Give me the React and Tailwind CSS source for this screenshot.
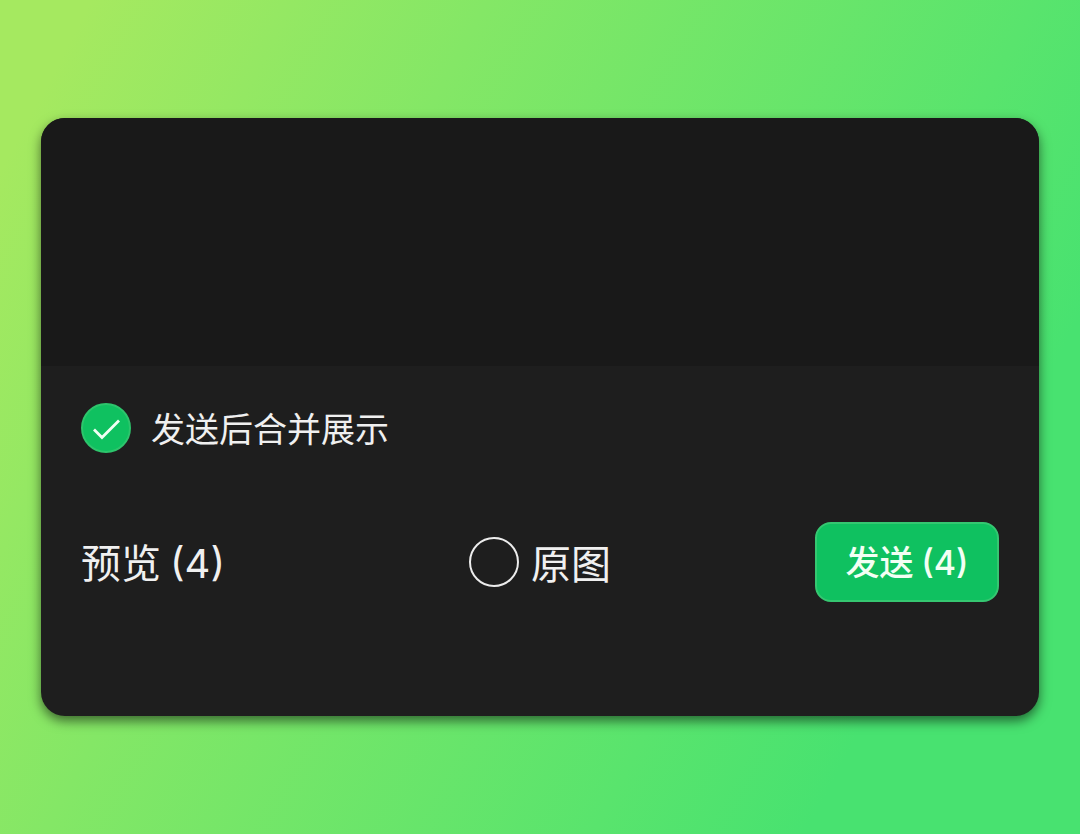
import { useState } from 'react';

function RoundCheck({ id, checked, onChange }) {
  return (
    <span className="grid shrink-0 place-items-center">
      <input
        id={id}
        type="checkbox"
        checked={checked}
        onChange={(e) => onChange(e.target.checked)}
        className="col-start-1 row-start-1 size-[50px] cursor-pointer appearance-none rounded-full border-2 border-[#ececec] checked:border-[#2dc56c] checked:bg-[#0fc160]"
      />
      {checked && (
        <svg
          viewBox="0 0 50 50"
          fill="none"
          stroke="#f2fff4"
          strokeWidth="2.8"
          className="pointer-events-none col-start-1 row-start-1 size-[50px]"
          aria-hidden="true"
        >
          <path d="M13 26.5l8 8L38 17.5" />
        </svg>
      )}
    </span>
  );
}

function Count({ value }) {
  return <span className="font-[Inter,sans-serif]">({value})</span>;
}

export default function App() {
  const [merge, setMerge] = useState(true);
  const [original, setOriginal] = useState(false);
  const count = 4;

  return (
    <main className="flex min-h-screen flex-col justify-center bg-linear-[118deg,#a5e960_6%,#84e766_32%,#59e46d_68%,#48e270_82%] px-[41px] font-['Noto_Sans_CJK_SC',sans-serif] text-[#f0f0f0]">
      <section className="overflow-hidden rounded-3xl bg-[#1e1e1e] shadow-[0_5px_12px_rgba(0,0,0,0.55)]">
        <div className="h-62 bg-[#191919]" />

        <div className="px-10 pt-[37px] pb-[114px]">
          <div className="flex items-center gap-5">
            <RoundCheck id="merge" checked={merge} onChange={setMerge} />
            <label htmlFor="merge" className="cursor-pointer text-[34px] leading-[50px]">
              发送后合并展示
            </label>
          </div>

          <div className="mt-[69px] grid grid-cols-[1fr_auto_1fr] items-center">
            <button type="button" className="cursor-pointer justify-self-start text-[40px] leading-[50px]">
              预览 <Count value={count} />
            </button>

            <div className="flex items-center gap-3">
              <RoundCheck id="original" checked={original} onChange={setOriginal} />
              <label htmlFor="original" className="cursor-pointer text-[40px] leading-[50px]">
                原图
              </label>
            </div>

            <button
              type="button"
              className="h-20 w-46 cursor-pointer justify-self-end rounded-2xl border-2 border-[#35c771] bg-[#0fc160] text-[34px] leading-[50px] font-medium text-[#f2fff4]"
            >
              发送 <Count value={count} />
            </button>
          </div>
        </div>
      </section>
    </main>
  );
}
